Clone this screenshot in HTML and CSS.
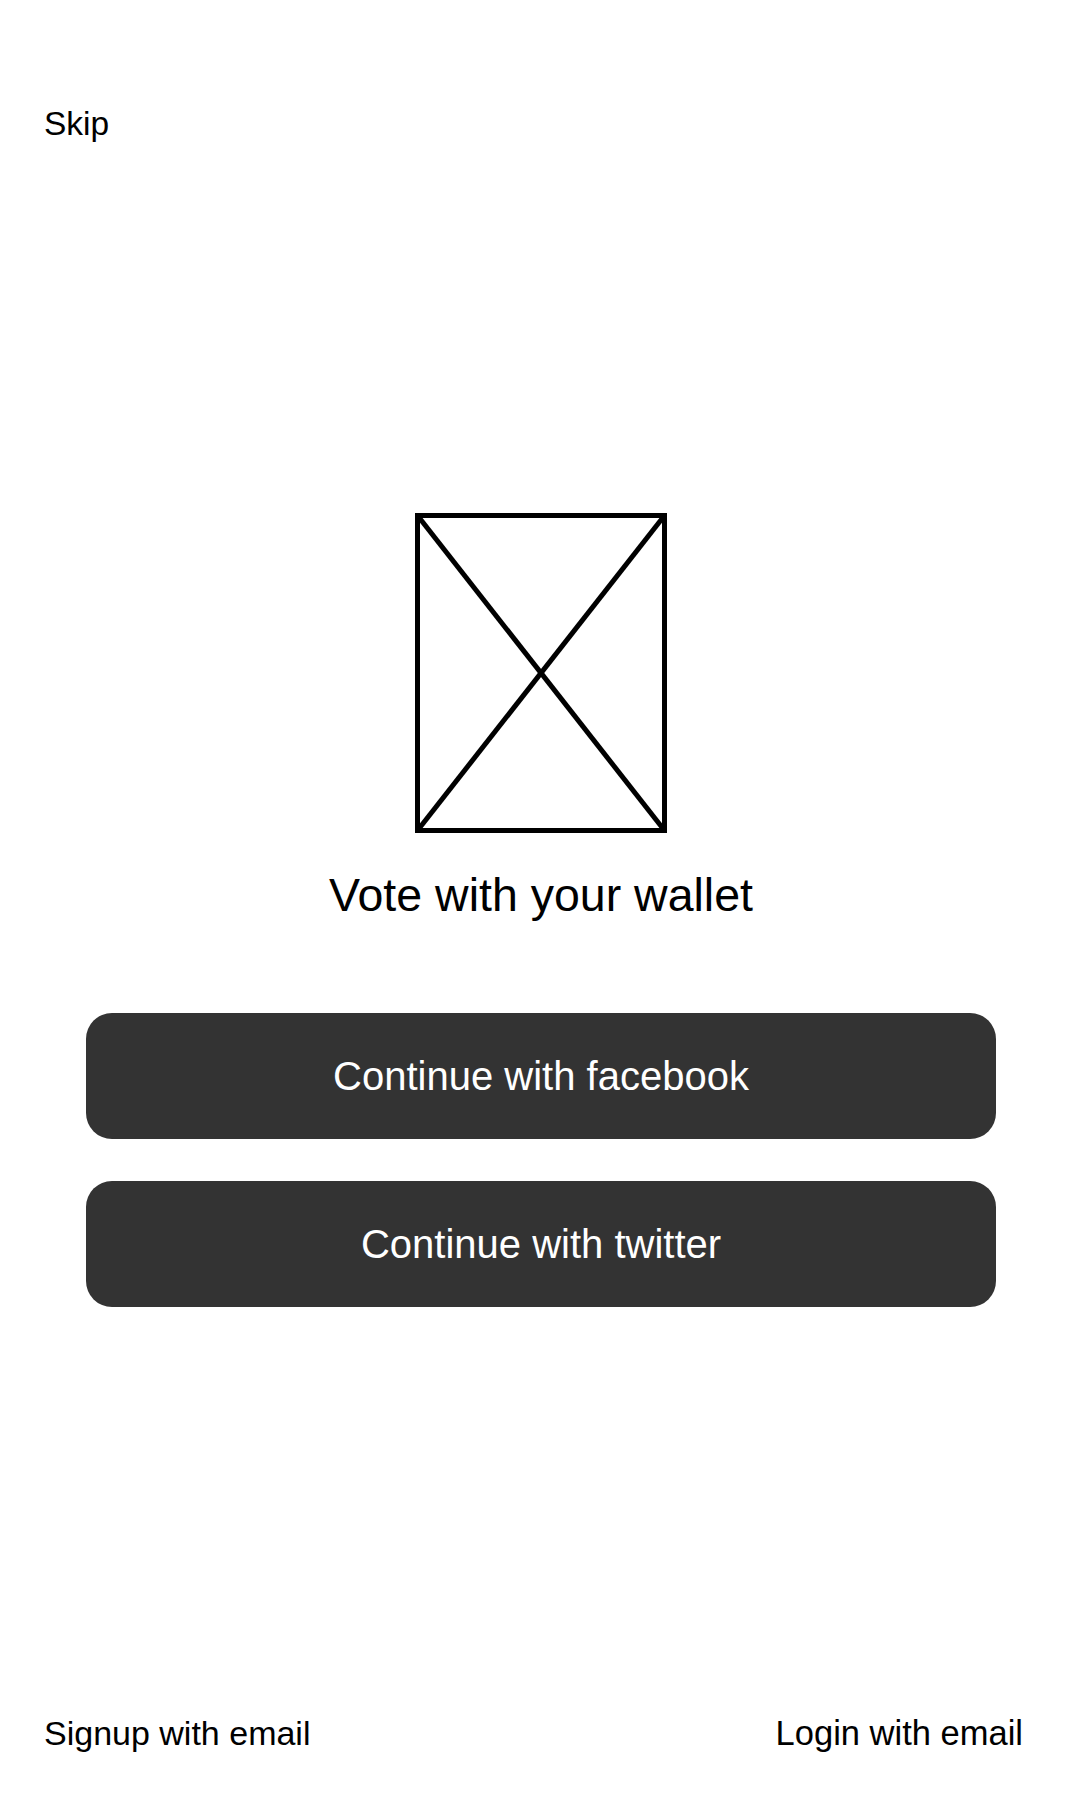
FILE: index.html
```html
<!DOCTYPE html>
<html lang="en">
<head>
<meta charset="utf-8">
<title>Vote with your wallet</title>
<link rel="stylesheet" href="styles.css">
</head>
<body>
<div class="screen">
  <header class="top">
    <a class="link skip">Skip</a>
  </header>
  <main class="main">
    <svg class="placeholder" width="252" height="320" viewBox="0 0 252 320" aria-hidden="true">
      <rect x="2.5" y="2.5" width="247" height="315" fill="none" stroke="#000" stroke-width="5"/>
      <line x1="2.5" y1="2.5" x2="249.5" y2="317.5" stroke="#000" stroke-width="5"/>
      <line x1="249.5" y1="2.5" x2="2.5" y2="317.5" stroke="#000" stroke-width="5"/>
    </svg>
    <h1 class="title">Vote with your wallet</h1>
    <div class="actions">
      <button class="btn">Continue with facebook</button>
      <button class="btn">Continue with twitter</button>
    </div>
  </main>
  <footer class="bottom">
    <a class="link">Signup with email</a>
    <a class="link login">Login with email</a>
  </footer>
</div>
</body>
</html>
```
FILE: styles.css
```css
html, body {
  margin: 0;
  padding: 0;
  background: #fff;
}
body {
  font-family: "Liberation Sans", Arial, sans-serif;
  color: #000;
}
.screen {
  width: 1080px;
  height: 1800px;
  display: flex;
  flex-direction: column;
  box-sizing: border-box;
  padding-bottom: 47px;
}
.top {
  padding: 104px 0 0 44px;
}
.link {
  font-size: 34px;
  line-height: 40px;
  color: #000;
  text-decoration: none;
}
.skip {
  font-size: 33.5px;
}
.login {
  font-size: 34.5px;
}
.main {
  display: flex;
  flex-direction: column;
  align-items: center;
  padding: 0 84px 0 86px;
  margin-top: 369px;
}
.placeholder {
  display: block;
}
.title {
  margin: 35px 0 0;
  font-size: 46.5px;
  line-height: 54px;
  font-weight: 400;
}
.actions {
  margin-top: 91px;
  width: 100%;
  display: flex;
  flex-direction: column;
  gap: 42px;
}
.btn {
  height: 126px;
  width: 100%;
  border: 0;
  border-radius: 26px;
  background: #333333;
  color: #fff;
  font-family: "Liberation Sans", Arial, sans-serif;
  font-size: 40px;
  padding: 0;
  cursor: pointer;
}
.bottom {
  margin-top: auto;
  display: flex;
  justify-content: space-between;
  padding: 0 57px 0 44px;
}
```
